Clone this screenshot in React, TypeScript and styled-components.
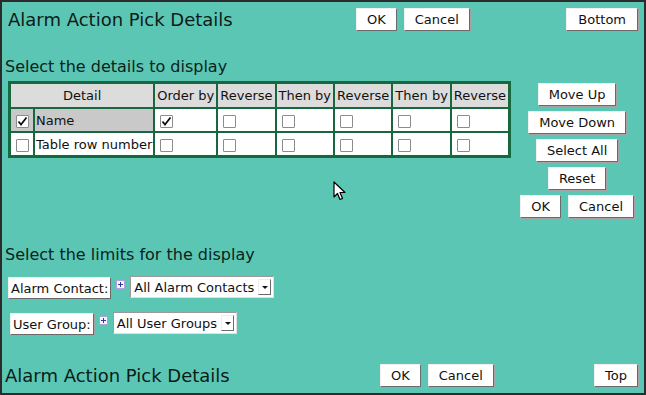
import styled, { createGlobalStyle } from "styled-components";

const GlobalStyle = createGlobalStyle`
  html, body {
    margin: 0;
    padding: 0;
  }
  body {
    font-family: "DejaVu Sans", Verdana, sans-serif;
    background: #5bc6b4;
  }
`;

const Frame = styled.div`
  position: relative;
  box-sizing: border-box;
  width: 646px;
  height: 395px;
  border: 2px solid #2b2b2b;
  background: #5bc6b4;
  color: #0c1c17;
  display: flex;
  flex-direction: column;
  overflow: hidden;
`;

const Bar = styled.div<{ $titleWidth: number; $top: number }>`
  display: grid;
  grid-template-columns: ${(p) => p.$titleWidth}px auto 1fr;
  align-items: center;
  margin-top: ${(p) => p.$top}px;
  padding-right: 6px;
`;

const Title = styled.h1<{ $indent: number }>`
  margin: 0 0 0 ${(p) => p.$indent}px;
  font-size: 18px;
  font-weight: normal;
  line-height: 21px;
  white-space: nowrap;
`;

const ButtonGroup = styled.div<{ $gap?: number }>`
  display: flex;
  gap: ${(p) => p.$gap ?? 7}px;
`;

const RightSlot = styled.div`
  display: flex;
  justify-content: flex-end;
`;

const Button = styled.button<{ $tight?: boolean; $wide?: boolean }>`
  box-sizing: border-box;
  height: 23px;
  padding: 0 ${(p) => (p.$tight ? 2 : p.$wide ? 11 : 10)}px;
  font-family: "DejaVu Sans", Verdana, sans-serif;
  font-size: 13px;
  color: #111;
  background: #fff;
  border: 1px solid;
  border-color: #efefef #6a6a6a #6a6a6a #efefef;
  box-shadow: 1px 1px 0 #a3a3a3;
  border-radius: 0;
  white-space: nowrap;
  cursor: default;
`;

const Heading = styled.h2<{ $top: number }>`
  margin: ${(p) => p.$top}px 0 0 3px;
  font-size: 16px;
  font-weight: normal;
  line-height: 19px;
  color: #0a231c;
`;

const MainRow = styled.div`
  display: flex;
  align-items: flex-start;
  margin: 5px 0 0 6px;
`;

const Grid = styled.table`
  border-collapse: separate;
  border-spacing: 2px;
  border: 1px solid #17673f;
  background: #17673f;
  font-size: 13px;
  color: #111;
`;

const HeadCell = styled.th`
  height: 23px;
  padding: 0 2px;
  background: #dcdcdc;
  font-weight: normal;
  text-align: center;
  white-space: nowrap;
`;

const Cell = styled.td<{ $shaded?: boolean }>`
  height: 22px;
  padding: 0 1px;
  background: ${(p) => (p.$shaded ? "#c9c9c9" : "#fff")};
  white-space: nowrap;
  vertical-align: middle;
`;

const Box = styled.span`
  box-sizing: border-box;
  display: inline-flex;
  align-items: center;
  justify-content: center;
  width: 13px;
  height: 13px;
  margin: 0 3px 0 4px;
  border: 1px solid #8c8c8c;
  border-radius: 1px;
  background: #fff;
  vertical-align: middle;
`;

const SideButtons = styled.div`
  width: 112px;
  margin: 2px 0 0 10px;
  display: flex;
  flex-direction: column;
  align-items: center;
  gap: 5px;
`;

const LimitRow = styled.div<{ $indent: number; $top: number }>`
  display: flex;
  align-items: flex-start;
  gap: 5px;
  margin: ${(p) => p.$top}px 0 0 ${(p) => p.$indent}px;

  & > button {
    margin-top: 1px;
    height: 22px;
  }
`;

const Expand = styled.svg`
  margin-top: 4px;
  flex: none;
`;

const SelectBox = styled.div`
  box-sizing: border-box;
  height: 22px;
  display: flex;
  align-items: center;
  gap: 4px;
  padding: 0 2px 0 3px;
  background: #fff;
  border: 1px solid;
  border-color: #9a9a9a #e2e2e2 #e2e2e2 #9a9a9a;
  font-size: 13px;
  color: #111;
  white-space: nowrap;
`;

const Arrow = styled.span`
  box-sizing: border-box;
  width: 13px;
  height: 16px;
  display: inline-flex;
  align-items: center;
  justify-content: center;
  background: #fff;
  border: 1px solid;
  border-color: #eeeeee #6a6a6a #6a6a6a #eeeeee;

  &::after {
    content: "";
    border-left: 3px solid transparent;
    border-right: 3px solid transparent;
    border-top: 3px solid #111;
  }
`;

const Pointer = styled.svg`
  position: absolute;
  left: 331px;
  top: 179px;
`;

function CheckBox({ checked }: { checked?: boolean }) {
  return (
    <Box>
      {checked && (
        <svg width="11" height="11" viewBox="0 0 11 11">
          <path d="M1.5 5.5 L4 8.5 L9.5 1.5" fill="none" stroke="#111" strokeWidth="1.8" />
        </svg>
      )}
    </Box>
  );
}

function PlusIcon() {
  return (
    <Expand width="9" height="9" viewBox="0 0 9 9">
      <rect x="0.5" y="0.5" width="8" height="8" fill="#f4f3ff" stroke="#a9a3d6" />
      <path d="M2 4.5 H7 M4.5 2 V7" stroke="#3a33a6" strokeWidth="1" />
    </Expand>
  );
}

const columns = ["Order by", "Reverse", "Then by", "Reverse", "Then by", "Reverse"];

const rows = [
  { label: "Name", shown: true, picks: [true, false, false, false, false, false] },
  { label: "Table row number", shown: false, picks: [false, false, false, false, false, false] },
];

export default function App() {
  return (
    <>
      <GlobalStyle />
      <Frame>
        <Bar $titleWidth={354} $top={6}>
          <Title $indent={6}>Alarm Action Pick Details</Title>
          <ButtonGroup>
            <Button>OK</Button>
            <Button>Cancel</Button>
          </ButtonGroup>
          <RightSlot>
            <Button $wide>Bottom</Button>
          </RightSlot>
        </Bar>

        <Heading $top={26}>Select the details to display</Heading>
        <MainRow>
          <Grid>
            <thead>
              <tr>
                <HeadCell colSpan={2}>Detail</HeadCell>
                {columns.map((c, i) => (
                  <HeadCell key={i}>{c}</HeadCell>
                ))}
              </tr>
            </thead>
            <tbody>
              {rows.map((r) => (
                <tr key={r.label}>
                  <Cell $shaded={r.shown}>
                    <CheckBox checked={r.shown} />
                  </Cell>
                  <Cell $shaded={r.shown}>{r.label}</Cell>
                  {r.picks.map((p, i) => (
                    <Cell key={i}>
                      <CheckBox checked={p} />
                    </Cell>
                  ))}
                </tr>
              ))}
            </tbody>
          </Grid>
          <SideButtons>
            <Button>Move Up</Button>
            <Button>Move Down</Button>
            <Button>Select All</Button>
            <Button>Reset</Button>
            <ButtonGroup>
              <Button>OK</Button>
              <Button>Cancel</Button>
            </ButtonGroup>
          </SideButtons>
        </MainRow>

        <Heading $top={27}>Select the limits for the display</Heading>
        <LimitRow $indent={6} $top={12}>
          <Button $tight>Alarm Contact:</Button>
          <PlusIcon />
          <SelectBox>
            All Alarm Contacts
            <Arrow />
          </SelectBox>
        </LimitRow>
        <LimitRow $indent={8} $top={13}>
          <Button $tight>User Group:</Button>
          <PlusIcon />
          <SelectBox>
            All User Groups
            <Arrow />
          </SelectBox>
        </LimitRow>

        <Bar $titleWidth={378} $top={29}>
          <Title $indent={3}>Alarm Action Pick Details</Title>
          <ButtonGroup>
            <Button>OK</Button>
            <Button>Cancel</Button>
          </ButtonGroup>
          <RightSlot>
            <Button>Top</Button>
          </RightSlot>
        </Bar>

        <Pointer width="13" height="20" viewBox="0 0 13 20">
          <path
            d="M1 1 V16 L4.5 12.5 L7 18.5 L9.5 17.5 L7 11.5 H12 Z"
            fill="#fff"
            stroke="#000"
            strokeWidth="1.2"
            strokeLinejoin="round"
          />
        </Pointer>
      </Frame>
    </>
  );
}
